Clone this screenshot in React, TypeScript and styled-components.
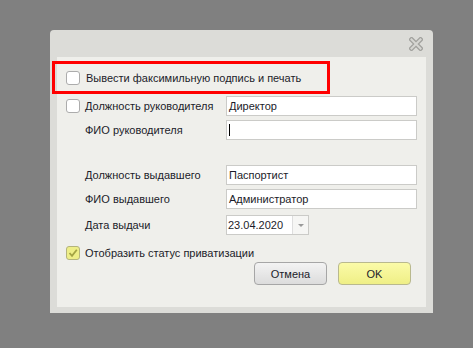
import styled, { createGlobalStyle } from 'styled-components';

const GlobalStyle = createGlobalStyle`
  html, body {
    margin: 0;
    padding: 0;
    background: #808080;
  }
  body {
    width: 473px;
    height: 348px;
    overflow: hidden;
    font-family: "Liberation Sans", Arial, sans-serif;
    font-size: 11px;
    color: #1c1c2a;
  }
`;

interface IField {
  label: string;
  value: string;
  checkbox?: boolean;
  caret?: boolean;
  gap: number;
}

const fields: IField[] = [
  { label: 'Должность руководителя', value: 'Директор', checkbox: true, gap: 2 },
  { label: 'ФИО руководителя', value: '', caret: true, gap: 4 },
  { label: 'Должность выдавшего', value: 'Паспортист', gap: 25 },
  { label: 'ФИО выдавшего', value: 'Администратор', gap: 4 },
];

const CloseIcon = () => (
  <svg width="14" height="14" viewBox="0 0 14 14">
    <g strokeLinecap="square">
      <path d="M2.5 2.5 L11.5 11.5 M11.5 2.5 L2.5 11.5" stroke="#a2a29e" strokeWidth="4.6" />
      <path d="M2.5 2.5 L11.5 11.5 M11.5 2.5 L2.5 11.5" stroke="#d6d6d2" strokeWidth="2" />
    </g>
  </svg>
);

const CheckMark = () => (
  <svg width="10" height="10" viewBox="0 0 10 10">
    <path d="M1.5 5 L4 7.8 L8.8 1.8" fill="none" stroke="#a3a343" strokeWidth="1.8" />
  </svg>
);

const App = () => {
  return (
    <>
      <GlobalStyle />
      <StyledPage>
        <StyledDialog>
          <StyledTitleBar>
            <CloseIcon />
          </StyledTitleBar>

          <StyledBody>
            <StyledHighlightRow>
              <StyledCheckbox />
              <span>Вывести факсимильную подпись и печать</span>
            </StyledHighlightRow>

            {fields.map((field: IField, index: number) => (
              <StyledRow key={index} $gap={field.gap}>
                <StyledCheckSlot>{field.checkbox && <StyledCheckbox />}</StyledCheckSlot>
                <StyledLabel>{field.label}</StyledLabel>
                <StyledField>
                  {field.value}
                  {field.caret && <StyledCaret />}
                </StyledField>
              </StyledRow>
            ))}

            <StyledRow $gap={6}>
              <StyledCheckSlot />
              <StyledLabel>Дата выдачи</StyledLabel>
              <StyledDateField>
                <StyledDateText>23.04.2020</StyledDateText>
                <StyledDropButton />
              </StyledDateField>
            </StyledRow>

            <StyledCheckRow>
              <StyledCheckbox $checked>
                <CheckMark />
              </StyledCheckbox>
              <span>Отобразить статус приватизации</span>
            </StyledCheckRow>

            <StyledButtons>
              <StyledButton>Отмена</StyledButton>
              <StyledButton $primary>OK</StyledButton>
            </StyledButtons>
          </StyledBody>
        </StyledDialog>
      </StyledPage>
    </>
  );
};

export default App;

/** STYLED COMPONENTS  **/

const StyledPage = styled.div`
  padding: 30px 0 0 50px;
`;

const StyledDialog = styled.div`
  display: flex;
  flex-direction: column;
  box-sizing: border-box;
  width: 383px;
  height: 283px;
  padding: 0 7px 6px;

  background: #dcdcd8;
  border-radius: 4px 4px 0 0;
`;

const StyledTitleBar = styled.div`
  display: flex;
  justify-content: flex-end;
  align-items: center;
  height: 27px;
  padding-right: 3px;
`;

const StyledBody = styled.div`
  display: flex;
  flex-direction: column;
  flex: 1;
  padding: 4px 9px 0;

  background: #efefeb;
`;

const StyledHighlightRow = styled.div`
  display: flex;
  align-items: center;
  gap: 6px;
  box-sizing: border-box;
  width: 278px;
  height: 33px;
  margin-left: -14px;
  padding-left: 11px;

  border: 3px solid #ff0000;
`;

const StyledCheckbox = styled.div<{ $checked?: boolean }>`
  display: flex;
  align-items: center;
  justify-content: center;
  box-sizing: border-box;
  width: 14px;
  height: 14px;

  border: 1px solid ${(p) => (p.$checked ? '#b4b47c' : '#acacac')};
  border-radius: 3px;
  background: ${(p) => (p.$checked ? '#eeee88' : '#ffffff')};
`;

const StyledRow = styled.div<{ $gap: number }>`
  display: flex;
  align-items: center;
  gap: 5px;
  height: 20px;
  margin-top: ${(p) => p.$gap}px;
`;

const StyledCheckSlot = styled.div`
  display: flex;
  width: 14px;
`;

const StyledLabel = styled.div`
  width: 136px;
  white-space: nowrap;
`;

const StyledField = styled.div`
  display: flex;
  align-items: center;
  box-sizing: border-box;
  width: 191px;
  height: 20px;
  padding: 0 2px;

  border: 1px solid #cbcbc8;
  background: #ffffff;
`;

const StyledCaret = styled.span`
  width: 1px;
  height: 12px;
  background: #000000;
`;

const StyledDateField = styled.div`
  display: flex;
  box-sizing: border-box;
  width: 83px;
  height: 20px;

  border: 1px solid #cbcbc8;
  background: #ffffff;
`;

const StyledDateText = styled.div`
  display: flex;
  align-items: center;
  flex: 1;
  padding-left: 1px;
`;

const StyledDropButton = styled.div`
  display: flex;
  align-items: center;
  justify-content: center;
  width: 15px;

  border-left: 1px solid #dedede;
  background: #f6f6f4;

  &::after {
    content: '';
    border-left: 3px solid transparent;
    border-right: 3px solid transparent;
    border-top: 3px solid #9a9a9a;
  }
`;

const StyledCheckRow = styled.div`
  display: flex;
  align-items: center;
  gap: 5px;
  height: 16px;
  margin-top: 10px;
`;

const StyledButtons = styled.div`
  display: flex;
  justify-content: flex-end;
  gap: 11px;
  margin-top: 1px;
  padding-right: 6px;
`;

const StyledButton = styled.div<{ $primary?: boolean }>`
  display: flex;
  align-items: center;
  justify-content: center;
  box-sizing: border-box;
  width: 73px;
  height: 23px;

  border: 1px solid ${(p) => (p.$primary ? '#b9b98e' : '#a6a6a6')};
  border-radius: 4px;
  background: ${(p) =>
    p.$primary
      ? 'linear-gradient(#fbfba8, #efef86)'
      : 'linear-gradient(#f3f3f3, #dcdcdc)'};
  font-size: 11px;
`;
